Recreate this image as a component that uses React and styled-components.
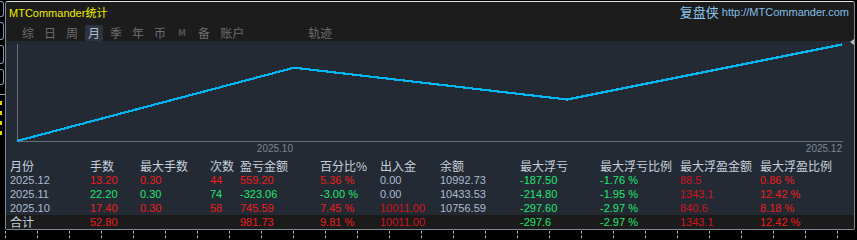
import React from 'react';
import styled, { createGlobalStyle } from 'styled-components';

const GlobalStyle = createGlobalStyle`
  html, body {
    margin: 0;
    padding: 0;
    background: #000;
  }
  body {
    width: 857px;
    height: 240px;
    overflow: hidden;
    font-family: "Liberation Sans", "Noto Sans CJK SC", sans-serif;
  }
`;

const tabs = ['综', '日', '周', '月', '季', '年', '币', 'M', '备', '账户'];

const columns = ['月份', '手数', '最大手数', '次数', '盈亏金额', '百分比%', '出入金', '余额', '最大浮亏', '最大浮亏比例', '最大浮盈金额', '最大浮盈比例'];

// tone: up = red, down = green, deep = dark red, plain = light text
const rows = [
  {
    month: '2025.12',
    cells: [
      ['13.20', 'up'], ['0.30', 'up'], ['44', 'up'], ['559.20', 'up'], ['5.36 %', 'up'],
      ['0.00', 'plain'], ['10992.73', 'plain'], ['-187.50', 'down'], ['-1.76 %', 'down'],
      ['88.5', 'deep'], ['0.86 %', 'up'],
    ],
  },
  {
    month: '2025.11',
    cells: [
      ['22.20', 'down'], ['0.30', 'down'], ['74', 'down'], ['-323.06', 'down'], ['-3.00 %', 'down'],
      ['0.00', 'plain'], ['10433.53', 'plain'], ['-214.80', 'down'], ['-1.95 %', 'down'],
      ['1343.1', 'deep'], ['12.42 %', 'up'],
    ],
  },
  {
    month: '2025.10',
    cells: [
      ['17.40', 'up'], ['0.30', 'up'], ['58', 'up'], ['745.59', 'up'], ['7.45 %', 'up'],
      ['10011.00', 'deep'], ['10756.59', 'plain'], ['-297.60', 'down'], ['-2.97 %', 'down'],
      ['840.6', 'deep'], ['8.18 %', 'up'],
    ],
  },
];

const total = [
  ['52.80', 'up'], ['', 'plain'], ['', 'plain'], ['981.73', 'up'], ['9.81 %', 'up'],
  ['10011.00', 'deep'], ['', 'plain'], ['-297.6', 'down'], ['-2.97 %', 'down'],
  ['1343.1', 'deep'], ['12.42 %', 'up'],
];

const equity = [0, 745.59, 422.53, 981.73];
const equityX = [11, 288, 561, 836];

const toneColor = {
  up: '#ee1c1c',
  deep: '#d0141e',
  down: '#1fe670',
  plain: '#aebbd2',
};

export default function App() {
  const maxV = Math.max(...equity);
  const points = equity
    .map((v, i) => `${equityX[i]},${(100 - (v / maxV) * 96.5).toFixed(1)}`)
    .join(' ');

  return (
    <Screen>
      <GlobalStyle />
      <Main>
        <LeftStub>
          <StubBox h={14} />
          <StubBox h={16} />
          <StubBox h={17} />
          <StubBox h={14} />
          <StubRule />
          <StubMark />
          <StubMark />
          <StubMark />
          <StubMark />
        </LeftStub>

        <Panel>
          <Header>
            <TitleRow>
              <Title>MTCommander统计</Title>
              <Brand>
                <BrandName>复盘侠</BrandName>
                <BrandUrl>http://MTCommander.com</BrandUrl>
              </Brand>
            </TitleRow>
            <TabRow>
              {tabs.map((t) => (
                <Tab key={t} active={t === '月'} small={t === 'M'}>
                  {t}
                </Tab>
              ))}
              <Tab offset={54}>轨迹</Tab>
            </TabRow>
          </Header>

          <Chart>
            <svg width="848" height="114" viewBox="0 0 848 114" overflow="visible">
              <line x1="11.5" y1="3" x2="11.5" y2="100" stroke="#6b717c" strokeWidth="1" />
              <line x1="11" y1="100.5" x2="837" y2="100.5" stroke="#6b717c" strokeWidth="1" />
              <polyline
                points={points}
                fill="none"
                stroke="#00b6f2"
                strokeWidth="2.2"
                shapeRendering="crispEdges"
              />
              <text x="287" y="111" fontSize="10" fill="#80868f" textAnchor="end" fontFamily="Liberation Sans">
                2025.10
              </text>
              <text x="836" y="111" fontSize="10" fill="#80868f" textAnchor="end" fontFamily="Liberation Sans">
                2025.12
              </text>
              <polygon points="848,-2 844,1 848,4" fill="#b8bcc2" />
            </svg>
          </Chart>

          <Table>
            <HeadRow>
              {columns.map((c) => (
                <HeadCell key={c}>{c}</HeadCell>
              ))}
            </HeadRow>
            {rows.map((r) => (
              <Row key={r.month}>
                <Cell tone="plain">{r.month}</Cell>
                {r.cells.map(([v, tone], i) => (
                  <Cell key={i} tone={tone}>
                    {v}
                  </Cell>
                ))}
              </Row>
            ))}
            <Row total>
              <HeadCell>合计</HeadCell>
              {total.map(([v, tone], i) => (
                <Cell key={i} tone={tone}>
                  {v}
                </Cell>
              ))}
            </Row>
          </Table>
        </Panel>

        <RightStub />
      </Main>

      <Ruler>
        <svg width="857" height="10">
          {Array.from({ length: 27 }).map((_, i) => (
            <line
              key={i}
              x1={5.5 + i * 32}
              y1="1"
              x2={5.5 + i * 32}
              y2="8"
              stroke="#bfbfbf"
              strokeDasharray="2.5 2"
            />
          ))}
        </svg>
      </Ruler>
    </Screen>
  );
}

const Screen = styled.div`
  display: flex;
  flex-direction: column;
  width: 857px;
  height: 240px;
  background: #000;
`;

const Main = styled.div`
  display: flex;
  height: 230px;
`;

const LeftStub = styled.div`
  width: 5px;
  display: flex;
  flex-direction: column;
  gap: 5px;
  padding-top: 1px;
`;

const StubBox = styled.div`
  width: 3px;
  height: ${(p) => p.h}px;
  border: 1px solid #8894a8;
  border-left: none;
  border-radius: 0 3px 3px 0;
`;

const StubRule = styled.div`
  width: 5px;
  height: 1px;
  margin-top: 4px;
  background: #9aa0aa;
`;

const StubMark = styled.div`
  width: 2px;
  height: 4px;
  margin-top: 1px;
  background: #e6d400;
`;

const RightStub = styled.div`
  width: 2px;
`;

const Panel = styled.div`
  width: 850px;
  height: 229px;
  margin-top: 1px;
  box-sizing: border-box;
  display: flex;
  flex-direction: column;
  border: 1px solid #7d8898;
  border-top-color: #e4e4e4;
  border-radius: 3px 3px 2px 2px;
  overflow: hidden;
  background: #232a33;
`;

const Header = styled.div`
  height: 39px;
  display: flex;
  flex-direction: column;
  background: #1c1c1c;
`;

const TitleRow = styled.div`
  height: 19px;
  display: flex;
  align-items: center;
  justify-content: space-between;
  padding: 0 5px 0 3px;
`;

const Title = styled.div`
  color: #eeee00;
  font-size: 11px;
`;

const Brand = styled.div`
  display: flex;
  align-items: center;
  gap: 3px;
`;

const BrandName = styled.span`
  color: #8cc6ef;
  font-size: 13px;
  font-family: "Noto Sans CJK SC", sans-serif;
`;

const BrandUrl = styled.span`
  color: #84bfea;
  font-size: 11px;
`;

const TabRow = styled.div`
  height: 20px;
  display: flex;
  align-items: flex-end;
  padding-left: 11px;
`;

const Tab = styled.div`
  height: 16px;
  line-height: 16px;
  margin: 0 2px 0 ${(p) => 2 + (p.offset || 0)}px;
  padding: 0 3px;
  min-width: 12px;
  text-align: center;
  border-radius: 2px;
  font-family: "Noto Sans CJK SC", sans-serif;
  font-size: ${(p) => (p.small ? '9px' : '12px')};
  font-weight: ${(p) => (p.small ? 700 : 400)};
  color: ${(p) => (p.active ? '#b4bfd0' : p.small ? '#5c5252' : '#6e6e6e')};
  background: ${(p) => (p.active ? '#2c3440' : 'transparent')};
`;

const Chart = styled.div`
  height: 114px;
  background: #232a33;
`;

const Table = styled.div`
  display: flex;
  flex-direction: column;
  background: #232a33;
`;

const grid = `
  display: grid;
  grid-template-columns: 80px 50px 70px 30px 80px 60px 60px 80px 80px 80px 80px 1fr;
  padding-left: 4px;
  white-space: nowrap;
`;

const HeadRow = styled.div`
  ${grid}
  height: 18px;
  padding-top: 3px;
  box-sizing: border-box;
  line-height: 15px;
`;

const HeadCell = styled.div`
  color: #c6d0de;
  font-size: 12px;
  font-family: "Noto Sans CJK SC", sans-serif;
`;

const Row = styled.div`
  ${grid}
  height: 14px;
  line-height: 14px;
  background: ${(p) => (p.total ? '#1b1b1b' : 'transparent')};
`;

const Cell = styled.div`
  font-size: 11px;
  color: ${(p) => toneColor[p.tone]};
`;

const Ruler = styled.div`
  height: 10px;
  line-height: 0;
`;
